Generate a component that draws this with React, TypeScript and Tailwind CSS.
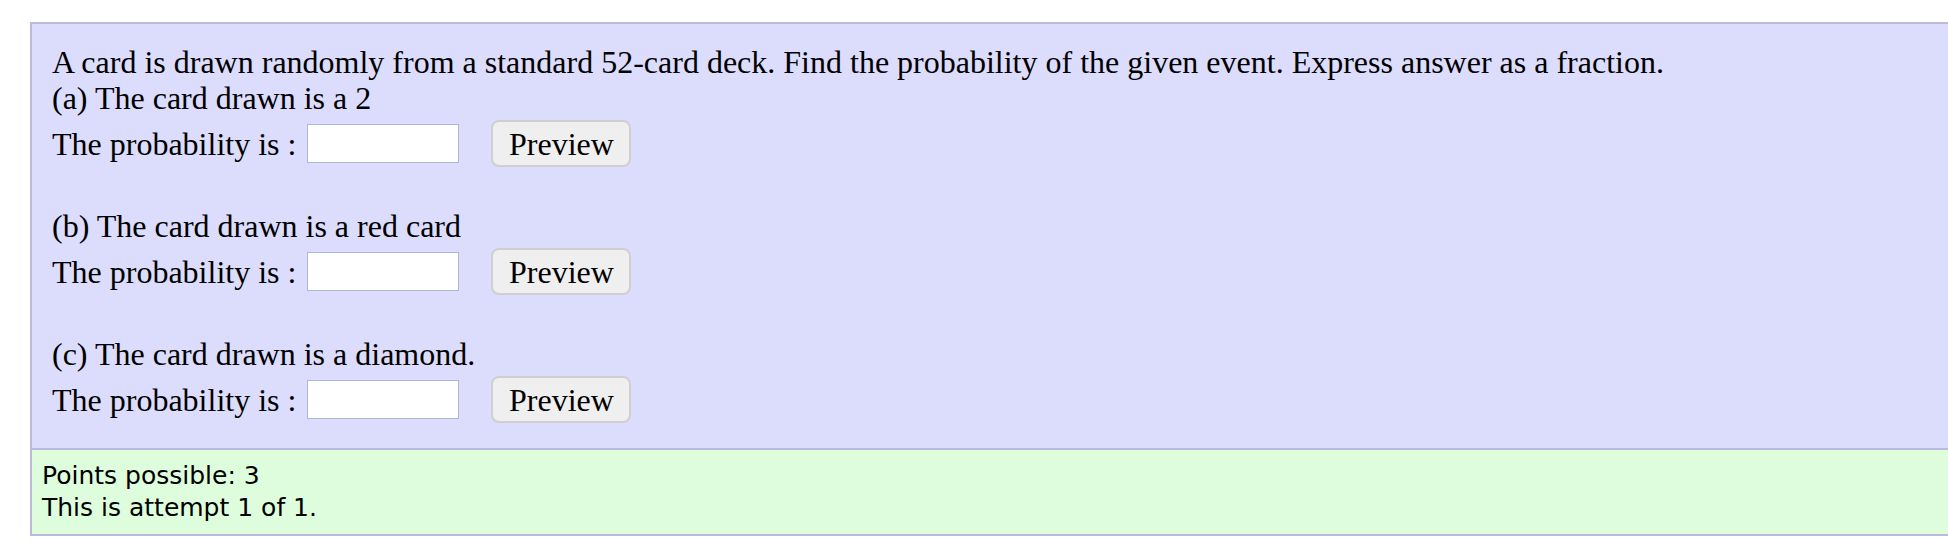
import React from "react";

function Row() {
  return (
    <div className="mt-[4px] flex h-[47px] items-center">
      <span className="leading-[36px]">The probability is :</span>
      <input
        type="text"
        className="ml-[11px] h-[39px] w-[152px] border border-[#b4b4d4] bg-white outline-none"
      />
      <button className="ml-[32px] h-[47px] w-[140px] rounded-[8px] border-2 border-[#cfcfcf] bg-[#efefef] text-[32px] leading-none text-black">
        Preview
      </button>
    </div>
  );
}

export default function App() {
  return (
    <div className="h-[556px] w-[1948px] overflow-hidden bg-white pl-[30px] pt-[22px]">
      <div className="w-[1940px] border-2 border-[#babadc]">
        <div
          className="bg-[#dcdcfc] pb-[25px] pl-[20px] pt-[20px] text-[32px] leading-[36px] text-black"
          style={{ fontFamily: '"Liberation Serif", "Times New Roman", serif' }}
        >
          <div>
            A card is drawn randomly from a standard 52-card deck. Find the probability of the given event. Express answer as a fraction.
          </div>
          <div>(a) The card drawn is a 2</div>
          <Row />
          <div className="mt-[41px]">(b) The card drawn is a red card</div>
          <Row />
          <div className="mt-[41px]">(c) The card drawn is a diamond.</div>
          <Row />
        </div>
        <div
          className="border-t-2 border-[#babadc] bg-[#ddfddd] py-[10px] pl-[10px] text-[25px] leading-[32px] text-black"
          style={{ fontFamily: '"DejaVu Sans", sans-serif' }}
        >
          <div>Points possible: 3</div>
          <div>This is attempt 1 of 1.</div>
        </div>
      </div>
    </div>
  );
}
